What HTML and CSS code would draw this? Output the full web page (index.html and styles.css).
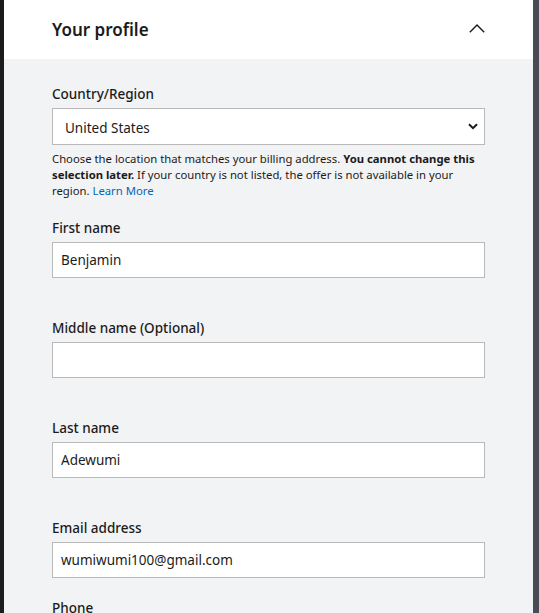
FILE: index.html
```html
<!DOCTYPE html>
<html lang="en">
<head>
  <meta charset="UTF-8">
  <title>Your profile</title>
  <link rel="stylesheet" href="styles.css">
</head>
<body>
  <div class="frame">
    <div class="edge-left"></div>
    <div class="panel">
      <div class="panel-head">
        <h2>Your profile</h2>
        <svg class="collapse" width="16" height="9" viewBox="0 0 16 9">
          <path d="M0.8 8.2 L8 1 L15.2 8.2" fill="none" stroke="#1b1b1b" stroke-width="1.4"/>
        </svg>
      </div>

      <div class="panel-body">
        <div class="field">
          <label>Country/Region</label>
          <div class="select-wrap">
            <select class="select">
              <option>United States</option>
            </select>
            <svg class="select-arrow" width="10" height="7" viewBox="0 0 10 7">
              <path d="M1 1.2 L5 5.2 L9 1.2" fill="none" stroke="#1b1b1b" stroke-width="2"/>
            </svg>
          </div>
          <p class="hint">Choose the location that matches your billing address. <b>You cannot change this selection later.</b> If your country is not listed, the offer is not available in your region. <a href="#">Learn More</a></p>
        </div>

        <div class="field">
          <label>First name</label>
          <input class="input" type="text" value="Benjamin">
        </div>

        <div class="field">
          <label>Middle name (Optional)</label>
          <input class="input" type="text" value="">
        </div>

        <div class="field">
          <label>Last name</label>
          <input class="input" type="text" value="Adewumi">
        </div>

        <div class="field field-tight">
          <label>Email address</label>
          <input class="input" type="text" value="wumiwumi100@gmail.com">
        </div>

        <div class="field">
          <label>Phone</label>
        </div>
      </div>
    </div>
    <div class="edge-right"></div>
  </div>
</body>
</html>
```

FILE: styles.css
```css
html, body {
  margin: 0;
  height: 100%;
  overflow: hidden;
}
body {
  font-family: "Noto Sans", "Open Sans", sans-serif;
  color: #1b1b1b;
  background: #1f1f1f;
}
.frame {
  display: flex;
  height: 100%;
}
.edge-left {
  width: 4px;
  background: #1c1c1c;
}
.edge-right {
  width: 6px;
  background: #4a4a55;
}
.panel {
  flex: 1;
  background: #f2f3f5;
}
.panel-head {
  height: 59px;
  background: #fff;
  display: flex;
  align-items: center;
  justify-content: space-between;
  padding: 0 48px;
}
.panel-head h2 {
  margin: 0;
  font-size: 17px;
  font-weight: 600;
  line-height: 24px;
}
.collapse {
  margin-top: -2px;
}
.panel-body {
  padding: 25px 48px 0;
}
.field {
  margin-bottom: 40px;
}
.field-tight {
  margin-bottom: 20px;
}
.field label {
  display: block;
  font-size: 13.5px;
  font-weight: 500;
  line-height: 20px;
  margin-bottom: 4px;
}
.select-wrap {
  position: relative;
}
.select {
  display: block;
  width: 100%;
  height: 37px;
  box-sizing: border-box;
  appearance: none;
  -webkit-appearance: none;
  border: 1px solid #b9b9b9;
  border-radius: 0;
  background: #fff;
  font-family: inherit;
  font-size: 13.5px;
  color: #1b1b1b;
  padding: 2px 30px 0 12px;
}
.select-arrow {
  position: absolute;
  right: 7px;
  top: 15px;
}
.hint {
  margin: 6px 0 -21px;
  font-size: 11.3px;
  line-height: 16px;
}
.hint b {
  font-weight: 700;
}
.hint a {
  color: #0067b8;
  text-decoration: none;
}
.input {
  display: block;
  width: 100%;
  height: 36px;
  box-sizing: border-box;
  border: 1px solid #b9b9b9;
  border-radius: 0;
  background: #fff;
  font-family: inherit;
  font-size: 13.5px;
  color: #1b1b1b;
  padding: 0 8px;
}
```
